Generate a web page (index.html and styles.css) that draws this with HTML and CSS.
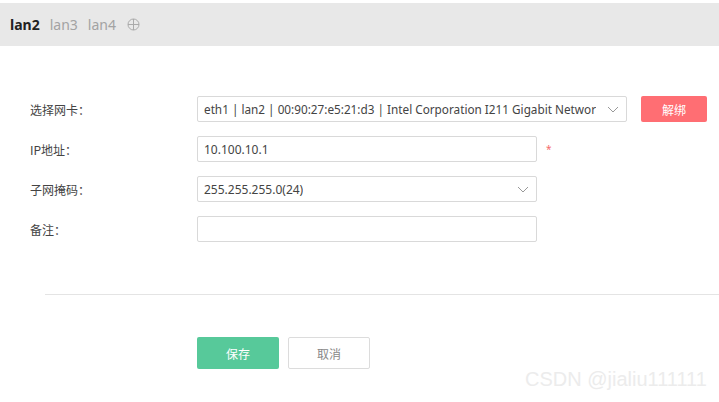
FILE: index.html
```html
<!DOCTYPE html>
<html>
<head>
<meta charset="utf-8">
<link rel="stylesheet" href="styles.css">
</head>
<body>
<div class="page">
  <div class="tabs">
    <span class="tab active">lan2</span>
    <span class="tab">lan3</span>
    <span class="tab">lan4</span>
    <span class="tab add"><svg width="13" height="13" viewBox="0 0 13 13"><circle cx="6.5" cy="6.5" r="5.5" fill="none" stroke="#aaa" stroke-width="1"/><path d="M1 6.5H12M6.5 1V12" stroke="#aaa" stroke-width="1"/></svg></span>
  </div>
  <div class="form">
    <div class="row">
      <label class="lbl">选择网卡：</label>
      <div class="field select wide">
        <span class="val long">eth1 | lan2 | 00:90:27:e5:21:d3 | Intel Corporation I211 Gigabit Networ</span>
        <svg class="arrow" width="12" height="7" viewBox="0 0 12 7"><path d="M1 1L6 6L11 1" fill="none" stroke="#999" stroke-width="1"/></svg>
      </div>
      <button class="btn danger">解绑</button>
    </div>
    <div class="row">
      <label class="lbl">IP地址：</label>
      <div class="field"><span class="val">10.100.10.1</span></div>
      <span class="req">*</span>
    </div>
    <div class="row">
      <label class="lbl">子网掩码：</label>
      <div class="field select">
        <span class="val">255.255.255.0(24)</span>
        <svg class="arrow" width="12" height="7" viewBox="0 0 12 7"><path d="M1 1L6 6L11 1" fill="none" stroke="#999" stroke-width="1"/></svg>
      </div>
    </div>
    <div class="row">
      <label class="lbl">备注：</label>
      <div class="field"></div>
    </div>
  </div>
  <div class="divider"></div>
  <div class="actions">
    <button class="btn primary">保存</button>
    <button class="btn ghost">取消</button>
  </div>
  <div class="watermark">CSDN @jialiu111111</div>
</div>
</body>
</html>
```
FILE: styles.css
```css
* { box-sizing: border-box; }
html, body { margin: 0; padding: 0; background: #fff; }
body {
  font-family: "Noto Sans", "Noto Sans CJK SC", sans-serif;
  font-size: 12px;
  color: #333;
  width: 719px;
  height: 402px;
  overflow: hidden;
}
.page { position: relative; height: 402px; padding-top: 3px; }
.tabs {
  height: 43px;
  background: #e8e8e8;
  display: flex;
  align-items: center;
  padding-left: 10px;
  gap: 10px;
}
.tab { font-size: 14px; color: #a3a3a3; line-height: 18px; }
.tab.active { color: #222; font-weight: bold; }
.tab.add { display: flex; align-items: center; margin-left: 1px; }
.form {
  padding-top: 50px;
  padding-left: 30px;
  display: flex;
  flex-direction: column;
  gap: 14px;
}
.row { display: flex; align-items: center; height: 26px; }
.lbl { width: 167px; color: #444; font-size: 12px; font-family: "Noto Sans CJK SC", sans-serif; }
.field {
  width: 340px;
  height: 26px;
  border: 1px solid #d9d9d9;
  border-radius: 2px;
  display: flex;
  align-items: center;
  padding: 0 6px;
  color: #444;
  font-size: 12px;
}
.field.wide { width: 430px; }
.field.select { justify-content: space-between; }
.val { white-space: nowrap; overflow: hidden; }
.val.long { font-size: 11.75px; }
.arrow { flex: none; margin-left: 4px; margin-right: 1px; }
.req { color: #f56c6c; margin-left: 9px; font-size: 10px; }
.btn {
  font-family: "Noto Sans CJK SC", sans-serif;
  font-size: 12px;
  border-radius: 2px;
  cursor: pointer;
}
.danger {
  margin-left: 14px;
  width: 66px;
  height: 26px;
  background: #ff6e73;
  border: none;
  color: #fff;
}
.divider {
  margin-top: 52px;
  margin-left: 45px;
  height: 1px;
  background: #e4e4e4;
}
.actions {
  margin-top: 42px;
  padding-left: 197px;
  display: flex;
  gap: 9px;
}
.primary {
  width: 82px;
  height: 32px;
  background: #57c99a;
  border: none;
  color: #fff;
}
.ghost {
  width: 82px;
  height: 32px;
  background: #fff;
  border: 1px solid #dcdcdc;
  color: #888;
}
.watermark {
  position: absolute;
  left: 525px;
  top: 368px;
  font-family: "Liberation Sans", Arial, sans-serif;
  font-size: 20px;
  color: #ececec;
}
```
